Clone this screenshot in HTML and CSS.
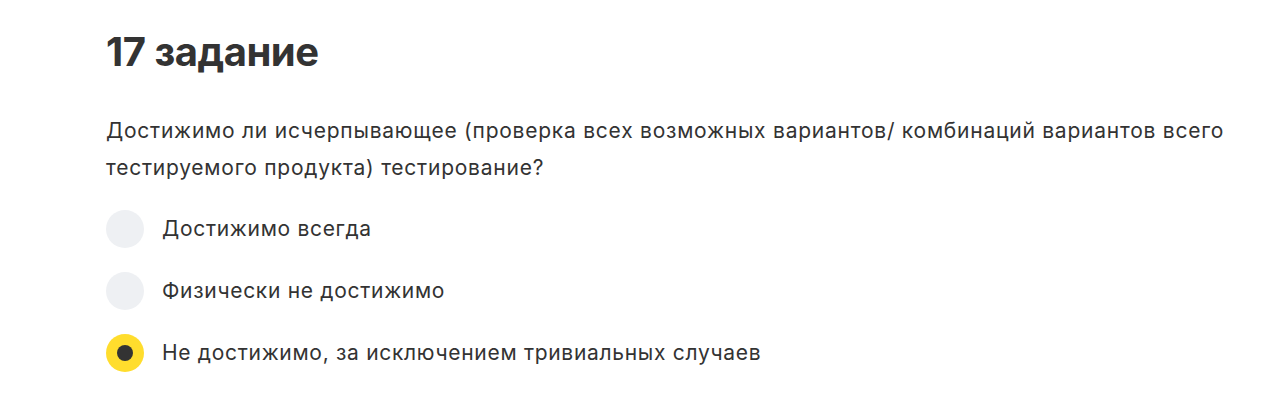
FILE: index.html
```html
<!DOCTYPE html>
<html lang="ru">
<head>
<meta charset="utf-8">
<link rel="stylesheet" href="styles.css">
</head>
<body>
<main class="task">
  <h1 class="task-title">17 задание</h1>
  <p class="task-question">Достижимо ли исчерпывающее (проверка всех возможных вариантов/ комбинаций вариантов всего тестируемого продукта) тестирование?</p>
  <div class="options">
    <label class="option"><span class="radio"></span><span class="option-text">Достижимо всегда</span></label>
    <label class="option"><span class="radio"></span><span class="option-text">Физически не достижимо</span></label>
    <label class="option"><span class="radio radio-checked"></span><span class="option-text">Не достижимо, за исключением тривиальных случаев</span></label>
  </div>
</main>
</body>
</html>
```
FILE: styles.css
```css
html, body {
  margin: 0;
  padding: 0;
  background: #ffffff;
}
body {
  font-family: Inter, "Liberation Sans", Arial, sans-serif;
  color: #333333;
}
.task {
  padding: 26px 30px 0 106px;
}
.task-title {
  margin: 0;
  font-size: 40px;
  line-height: 52px;
  font-weight: 700;
  letter-spacing: -0.5px;
}
.task-question {
  margin: 34px 0 0;
  font-size: 21px;
  line-height: 37px;
  letter-spacing: 0.76px;
  max-width: 1140px;
}
.options {
  display: flex;
  flex-direction: column;
  gap: 24px;
  margin-top: 24px;
}
.option {
  display: flex;
  align-items: center;
  gap: 18px;
  font-size: 21px;
  line-height: 36px;
  letter-spacing: 0.7px;
}
.radio {
  width: 38px;
  height: 38px;
  border-radius: 50%;
  background: #eef0f3;
  display: flex;
  align-items: center;
  justify-content: center;
  flex: none;
}
.radio-checked {
  background: #ffdd2d;
}
.radio-checked::after {
  content: "";
  width: 16px;
  height: 16px;
  border-radius: 50%;
  background: #333333;
}
```
